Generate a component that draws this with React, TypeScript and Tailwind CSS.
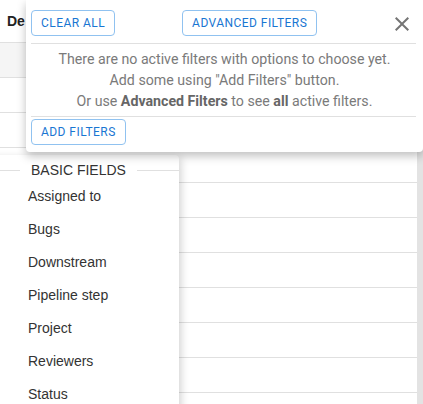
import React from 'react';

const fields = ['Assigned to', 'Bugs', 'Downstream', 'Pipeline step', 'Project', 'Reviewers', 'Status'];

function OutlinedButton({ label }: { label: string }) {
    return (
        <button className="h-[26px] px-[9px] border border-[#90c2f0] rounded-[4px] text-[#1976d2] text-[12px] tracking-[0.45px] uppercase bg-white">
            {label}
        </button>
    );
}

function CloseIcon() {
    return (
        <svg viewBox="0 0 24 24" className="w-6 h-6 fill-[#757575]">
            <path d="M19 6.41 17.59 5 12 10.59 6.41 5 5 6.41 10.59 12 5 17.59 6.41 19 12 13.41 17.59 19 19 17.59 13.41 12z" />
        </svg>
    );
}

export default function App() {
    return (
        <div className="relative w-[423px] h-[404px] overflow-hidden bg-white font-['Roboto',sans-serif]">
            {/* table behind the popovers */}
            <div className="flex h-full">
                <div className="flex-1 flex flex-col">
                    <div className="h-[43px] shrink-0 border-b border-[#e0e0e0] flex items-center">
                        <div className="w-[26px] pl-[7px] overflow-hidden whitespace-nowrap font-bold text-[14px] text-[#222] font-['Liberation_Sans',sans-serif]">
                            De
                        </div>
                    </div>
                    <div className="h-[35px] shrink-0 border-b border-[#e0e0e0] bg-[#f5f5f5]" />
                    {Array.from({ length: 9 }).map((_, i) => (
                        <div key={i} className="h-[35px] shrink-0 border-b border-[#e0e0e0]" />
                    ))}
                </div>
                <div className="w-[6px] bg-[#e3e3e3]" />
            </div>

            {/* field menu */}
            <div className="absolute left-[-10px] top-[155px] w-[189px] h-[260px] bg-white rounded-tr-[4px] shadow-[2px_3px_8px_rgba(0,0,0,0.18)] pt-[7px] font-['Liberation_Sans',sans-serif]">
                <div className="flex items-center h-[16px]">
                    <div className="w-[30px] h-px bg-[#e0e0e0]" />
                    <span className="px-[11px] text-[14px] text-[#333]">BASIC FIELDS</span>
                    <div className="flex-1 h-px bg-[#e0e0e0]" />
                </div>
                <div className="mt-[2px]">
                    {fields.map((f) => (
                        <div key={f} className="h-[33px] flex items-center pl-[38px] text-[14px] text-[#333]">
                            {f}
                        </div>
                    ))}
                </div>
            </div>

            {/* active filters panel */}
            <div className="absolute left-[26px] top-0 w-[397px] h-[152px] bg-white rounded-b-[4px] shadow-[0_4px_10px_rgba(0,0,0,0.25)] px-[5px] pt-[10px]">
                <div className="flex items-center">
                    <OutlinedButton label="Clear all" />
                    <div className="ml-[67px]">
                        <OutlinedButton label="Advanced filters" />
                    </div>
                    <div className="ml-auto mr-[4px] mt-[1px]">
                        <CloseIcon />
                    </div>
                </div>
                <div className="mt-[7px] h-px bg-[#e0e0e0] mr-[2px]" />
                <div className="pt-[5px] pb-[4px] text-center text-[14.2px] leading-[21px] text-[#7a7a7a]">
                    <div>There are no active filters with options to choose yet.</div>
                    <div>Add some using "Add Filters" button.</div>
                    <div>
                        Or use <b className="font-bold text-[#666]">Advanced Filters</b> to see <b className="font-bold text-[#666]">all</b> active filters.
                    </div>
                </div>
                <div className="h-px bg-[#e0e0e0] mr-[2px]" />
                <div className="mt-[2px]">
                    <OutlinedButton label="Add filters" />
                </div>
            </div>
        </div>
    );
}
